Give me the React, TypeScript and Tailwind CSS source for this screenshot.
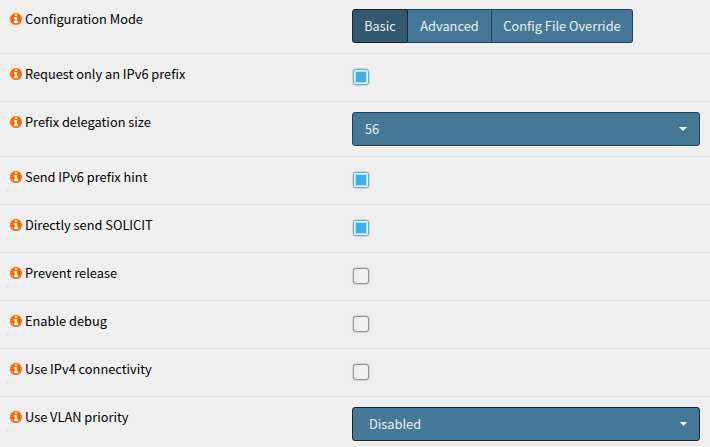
import { ReactNode, useState } from "react";
import clsx from "clsx";

function InfoIcon() {
  return (
    <svg viewBox="0 128 1536 1536" className="h-3 w-3 shrink-0 fill-[#ff6a00]" aria-hidden="true">
      <circle cx="768" cy="896" r="700" className="fill-white" />
      <path d="M1024 1376v-160q0-14-9-23t-23-9h-96v-512q0-14-9-23t-23-9h-320q-14 0-23 9t-9 23v160q0 14 9 23t23 9h96v320h-96q-14 0-23 9t-9 23v160q0 14 9 23t23 9h448q14 0 23-9t9-23zm-128-896v-160q0-14-9-23t-23-9h-192q-14 0-23 9t-9 23v160q0 14 9 23t23 9h192q14 0 23-9t9-23zm640 416q0 209-103 385.5t-279.5 279.5-385.5 103-385.5-103-279.5-279.5-103-385.5 103-385.5 279.5-279.5 385.5-103 385.5 103 279.5 279.5 103 385.5z" />
    </svg>
  );
}

function Row({ label, size = "h-12", children }: { label: string; size?: string; children: ReactNode }) {
  return (
    <div className={clsx("flex shrink-0 items-start border-t border-[#e1e1e1] pt-[10px] pr-[10px] pl-[10px]", size)}>
      <div className="flex h-5 w-[342px] shrink-0 items-center gap-[3px]">
        <InfoIcon />
        <span className="whitespace-nowrap">{label}</span>
      </div>
      {children}
    </div>
  );
}

function Checkbox({ initial = false }: { initial?: boolean }) {
  const [checked, setChecked] = useState(initial);
  return (
    <button
      role="checkbox"
      aria-checked={checked}
      onClick={() => setChecked(!checked)}
      className={clsx(
        "mt-[5px] ml-px flex h-4 w-4 items-center justify-center rounded-[3px] border shadow-[0_0_1px_1px_rgba(0,0,0,0.12)]",
        checked ? "border-[#4db4ec] bg-[#f4f6f8]" : "border-[#979797] bg-[#eff0f2]",
      )}
    >
      {checked && <span className="h-[10px] w-[10px] bg-[#3daee9] shadow-[0_0_0_1px_rgba(61,174,233,0.35)]" />}
    </button>
  );
}

function Select({ value, active = false }: { value: string; active?: boolean }) {
  return (
    <button
      className={clsx(
        "flex h-[34px] w-[348px] items-center justify-between rounded-[3px] border bg-[#457896] pr-[12px] text-white/90",
        active ? "border-[#1b2229] pl-4" : "border-[#1d4259] pl-3",
      )}
    >
      <span>{value}</span>
      <svg viewBox="0 0 8 4" className={clsx("h-1 fill-white", active ? "w-[7px]" : "w-2")} preserveAspectRatio="none">
        <path d="M0 0h8L4 4z" />
      </svg>
    </button>
  );
}

export default function App() {
  return (
    <main className="flex h-[447px] w-[710px] flex-col overflow-hidden bg-[#efefef] font-['Noto_Sans_CJK_SC',sans-serif] text-[12.8px] leading-5 text-black">
      <div className="-mt-[2px] flex shrink-0 flex-col">
        <Row label="Configuration Mode" size="h-[55px]">
          <div className="flex h-[34px] text-white/90">
            <button className="w-14 rounded-l-[3px] border border-[#1b2229] bg-[#31586e]">Basic</button>
            <button className="w-21 border-y border-r border-[#1d4259] bg-[#457896]">Advanced</button>
            <button className="w-[141px] rounded-r-[3px] border-y border-r border-[#1d4259] bg-[#457896]">
              Config File Override
            </button>
          </div>
        </Row>
        <Row label="Request only an IPv6 prefix"><Checkbox initial /></Row>
        <Row label="Prefix delegation size" size="h-[55px]"><Select value="56" /></Row>
        <Row label="Send IPv6 prefix hint"><Checkbox initial /></Row>
        <Row label="Directly send SOLICIT"><Checkbox initial /></Row>
        <Row label="Prevent release"><Checkbox /></Row>
        <Row label="Enable debug"><Checkbox /></Row>
        <Row label="Use IPv4 connectivity"><Checkbox /></Row>
        <Row label="Use VLAN priority" size="h-[55px]"><Select value="Disabled" active /></Row>
      </div>
    </main>
  );
}
